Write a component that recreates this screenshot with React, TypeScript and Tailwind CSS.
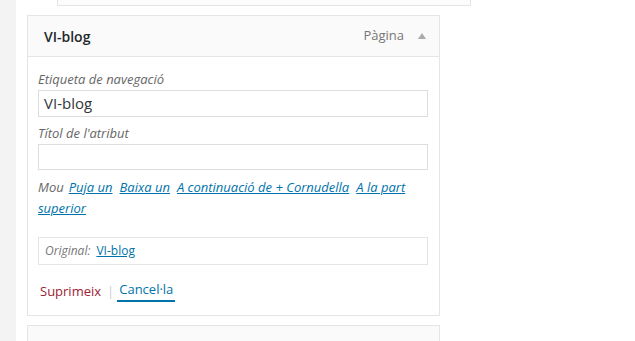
export default function App() {
  return (
    <div
      className="flex h-[341px] w-[635px] overflow-hidden bg-white text-[13px] text-[#444]"
      style={{ fontFamily: '"Open Sans", "Liberation Sans", sans-serif' }}
    >
      {/* admin side strip */}
      <div className="w-[16px] shrink-0 bg-[#f3f3f3]" />

      <div className="w-[430px] shrink-0 pl-[11px]">
        {/* tail of the previous (indented) item */}
        <div className="ml-[30px] h-[6px] w-[414px] border border-t-0 border-[#e5e5e5] bg-[#fcfcfc]" />

        <div className="mt-[9px] w-[413px]">
          {/* handle */}
          <div className="flex h-[42px] items-center border border-[#e5e5e5] bg-[#fafafa] pl-[16px] pr-[12px]">
            <span className="flex-1 text-[14px] font-semibold text-[#23282d]">VI-blog</span>
            <span className="text-[13px] text-[#777]">Pàgina</span>
            <span className="ml-[14px] mr-[1px] h-0 w-0 border-x-[4px] border-b-[6px] border-x-transparent border-b-[#aaa]" />
          </div>

          {/* settings */}
          <div className="border border-t-0 border-[#e5e5e5] bg-white px-[10px] pb-[13px] pt-[12px]">
            <p className="text-[13px] italic leading-[21px] text-[#666]">Etiqueta de navegació</p>
            <div className="flex h-[27px] w-[390px] items-center border border-[#ddd] px-[5px] text-[15px] text-[#32373c]">
              VI-blog
            </div>

            <p className="mt-[6px] text-[13px] italic leading-[21px] text-[#666]">Títol de l'atribut</p>
            <div className="h-[26px] w-[390px] border border-[#ddd]" />

            <p className="mt-[7px] w-[380px] text-[13px] italic leading-[21px] text-[#666]">
              <span className="mr-[5px]">Mou</span>
              <a className="mr-[7px] text-[#0073aa] underline">Puja un</a>
              <a className="mr-[7px] text-[#0073aa] underline">Baixa un</a>
              <a className="mr-[7px] text-[#0073aa] underline">A continuació de + Cornudella</a>
              <a className="text-[#0073aa] underline">A la part superior</a>
            </p>

            <div className="mt-[18px] flex h-[28px] w-[390px] items-center border border-[#e5e5e5] px-[6px] text-[12px]">
              <span className="italic text-[#777]">Original:</span>
              <a className="ml-[6px] text-[#0073aa] underline">VI-blog</a>
            </div>

            <div className="mt-[14px] flex items-center pl-[2px] text-[13px] leading-[20px]">
              <a className="text-[#9a2233]">Suprimeix</a>
              <span className="ml-[6px] mr-[3px] text-[#ccc]">|</span>
              <a className="border-b-2 border-[#0073aa] px-[2px] pb-[1px] text-[#0073aa]">Cancel·la</a>
            </div>
          </div>

          {/* next item */}
          <div className="mt-[9px] h-[30px] border border-[#e5e5e5] bg-[#fafafa]" />
        </div>
      </div>
    </div>
  );
}
